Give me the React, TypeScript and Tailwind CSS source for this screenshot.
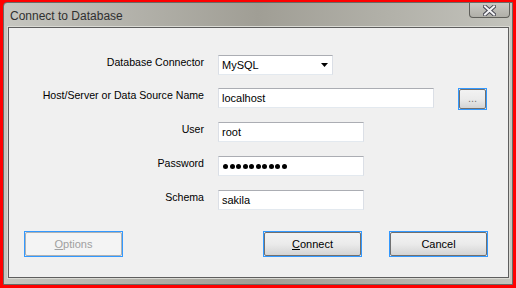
import React from 'react';

const font = { fontFamily: '"Liberation Sans", Arial, sans-serif' };

function TextBox({ width, children }: { width: string; children?: React.ReactNode }) {
  return (
    <div
      className={`${width} h-[20px] bg-white border border-t-[#abadb3] border-l-[#dbdfe6] border-r-[#dbdfe6] border-b-[#e3e9ef] flex items-center pl-[3px] text-[11px] text-black`}
    >
      {children}
    </div>
  );
}

function WinButton({
  children,
  disabled,
  className = '',
}: {
  children: React.ReactNode;
  disabled?: boolean;
  className?: string;
}) {
  return (
    <div className={`border border-[#3399ff] flex ${className}`}>
      <div
        className={`flex-1 flex items-center justify-center rounded-[2px] border text-[11px] ${
          disabled
            ? 'border-[#adb2b5] bg-[#f4f4f4] text-[#a0a0a0]'
            : 'border-[#707070] bg-gradient-to-b from-[#f2f2f2] via-[#ebebeb] to-[#d4d4d4] text-black'
        }`}
      >
        {children}
      </div>
    </div>
  );
}

function Row({ label, children, className = '' }: { label: string; children: React.ReactNode; className?: string }) {
  return (
    <div className={`flex items-start h-[20px] ${className}`}>
      <div className="w-[195px] text-right text-[10.6px] leading-[13px] text-black pt-[1px]">{label}</div>
      <div className="ml-[14px] flex items-start">{children}</div>
    </div>
  );
}

export default function App() {
  return (
    <div className="w-[516px] h-[288px] bg-[#ff0000] pt-[2px] pl-[3px] pr-[3px] pb-[3px] flex" style={font}>
      <div className="flex-1 flex flex-col rounded-tl-[4px] border border-[#6a6a66] bg-gradient-to-r from-[#c6c6c0] via-[#a09e95] to-[#c3c3bc]">
        {/* Title bar */}
        <div className="h-[24px] flex justify-between pl-[6px] pr-[2px]">
          <span className="self-center mt-[1px] text-[12px] text-[#303030]">Connect to Database</span>
          <div className="w-[41px] h-[15px] rounded-b-[4px] border border-t-0 border-[#5f5f5a] bg-gradient-to-b from-[#c9c9c3] to-[#b0afa8] flex items-center justify-center">
            <svg width="13" height="11" viewBox="0 0 13 11">
              <path d="M2 1.5 L11 9.5 M11 1.5 L2 9.5" stroke="#4a4a55" strokeWidth="4" strokeLinecap="square" />
              <path d="M2 1.5 L11 9.5 M11 1.5 L2 9.5" stroke="#f4f4f6" strokeWidth="2" strokeLinecap="square" />
            </svg>
          </div>
        </div>

        {/* Client area */}
        <div className="flex-1 ml-[4px] mr-[3px] mb-[6px] border border-[#5e5e5e] outline outline-1 outline-[#dadad4] bg-[#f0f0f0] flex flex-col">
          <Row label="Database Connector" className="mt-[27px]">
            <div className="w-[115px] h-[20px] bg-white border border-t-[#abadb3] border-l-[#dbdfe6] border-r-[#dbdfe6] border-b-[#e3e9ef] flex items-center justify-between pl-[3px] pr-[4px] text-[11px] text-black">
              <span>MySQL</span>
              <svg width="7" height="4" viewBox="0 0 7 4">
                <path d="M0 0 H7 L3.5 4 Z" fill="#000" />
              </svg>
            </div>
          </Row>
          <Row label="Host/Server or Data Source Name" className="mt-[13px]">
            <TextBox width="w-[216px]">localhost</TextBox>
            <WinButton className="ml-[24px] w-[29px] h-[22px]">
              <span className="text-[#7a7a7a] leading-none -mt-[2px]">...</span>
            </WinButton>
          </Row>
          <Row label="User" className="mt-[14px]">
            <TextBox width="w-[146px]">root</TextBox>
          </Row>
          <Row label="Password" className="mt-[14px]">
            <TextBox width="w-[146px]">
              <div className="flex gap-[1.5px] pl-[1px]">
                {Array.from({ length: 10 }).map((_, i) => (
                  <span key={i} className="w-[5px] h-[5px] rounded-full bg-black" />
                ))}
              </div>
            </TextBox>
          </Row>
          <Row label="Schema" className="mt-[14px]">
            <TextBox width="w-[146px]">sakila</TextBox>
          </Row>

          {/* Buttons */}
          <div className="flex mt-[21px] pl-[15px] pr-[20px]">
            <WinButton disabled className="w-[99px] h-[26px]">
              <span>
                <span className="underline">O</span>ptions
              </span>
            </WinButton>
            <WinButton className="ml-auto w-[99px] h-[26px]">
              <span>
                <span className="underline">C</span>onnect
              </span>
            </WinButton>
            <WinButton className="ml-[27px] w-[99px] h-[26px]">
              <span>Cancel</span>
            </WinButton>
          </div>
        </div>
      </div>
    </div>
  );
}
